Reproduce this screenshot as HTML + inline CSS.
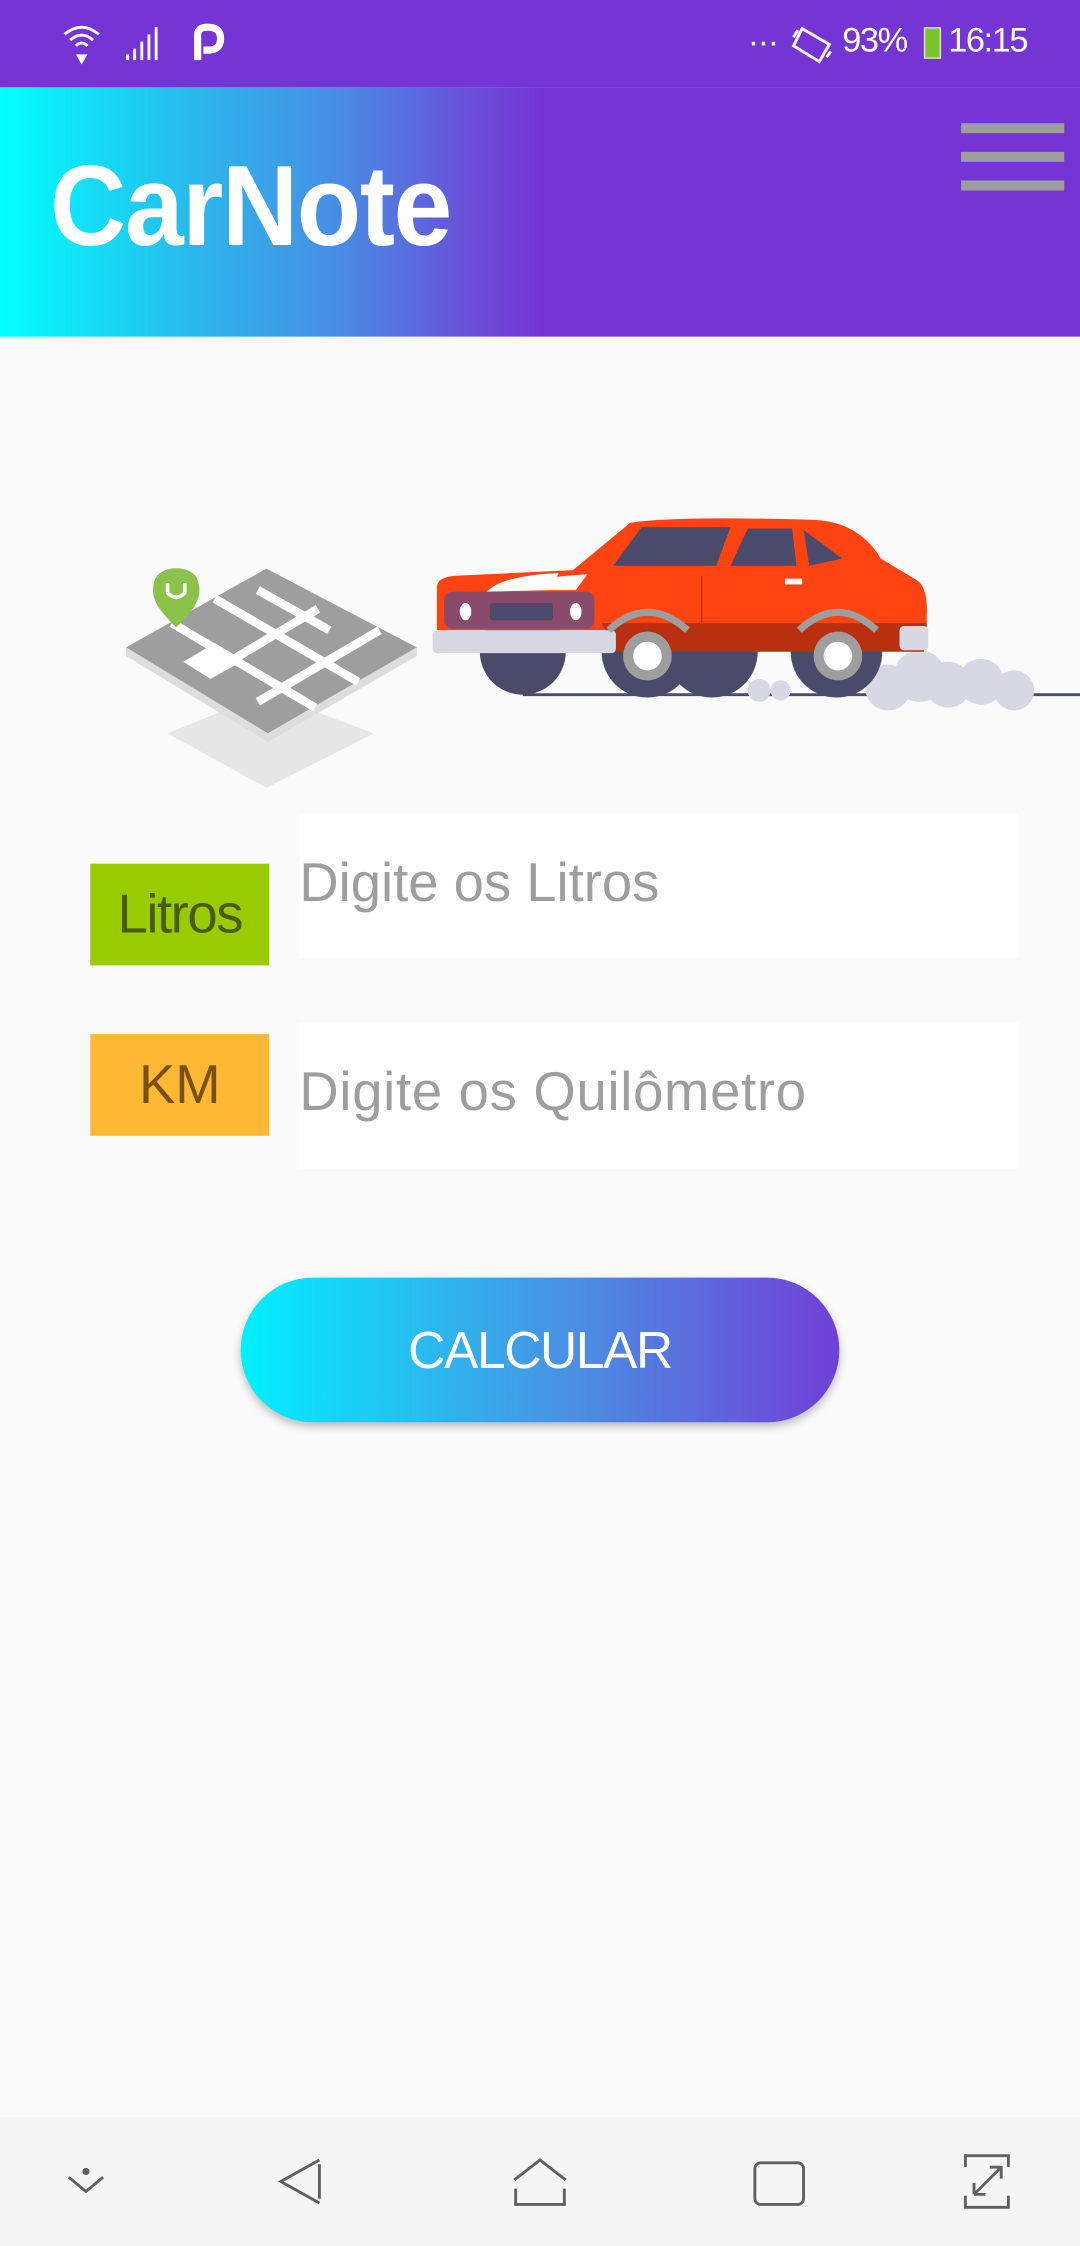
<!DOCTYPE html>
<html><head><meta charset="utf-8"><style>
html,body{margin:0;padding:0;width:1080px;height:2246px;overflow:hidden;background:#fafafa;font-family:"Liberation Sans","DejaVu Sans",sans-serif}
#s{position:absolute;left:0;top:0;width:754px;height:1568px;transform:scale(1.43236);transform-origin:0 0;background:#fafafa}
.a{position:absolute}
</style></head><body><div id="s">
<div class="a" style="left:0;top:0;width:754px;height:61px;background:#7535d4"></div>
<div class="a" style="left:0;top:61px;width:754px;height:174px;background:linear-gradient(90deg,#00ffff 0%,#2ab8ec 18%,#4a8ae4 32%,#6a4ed8 44%,#7535d4 50%,#7535d4 100%)"></div>
<!-- status -->
<svg class="a" style="left:40px;top:14px" width="130" height="34" viewBox="0 0 130 34">
<g fill="none" stroke="#fff" stroke-width="2"><path d="M5 10 Q17 0 29 10"/><path d="M9 14 Q17 7 25 14"/><path d="M13 18 Q17 14 21 18"/></g>
<path d="M13 24 L21 24 L17 31Z" fill="#fff"/>
<g fill="#fff"><rect x="48" y="24" width="2" height="4"/><rect x="53" y="20" width="2" height="8"/><rect x="58" y="15" width="2" height="13"/><rect x="63" y="10" width="2" height="18"/><rect x="68" y="5" width="2" height="23"/></g>
<path d="M98 28 V10 Q98 5 105 5 Q114 5 114 13 Q114 21 105 21 H102" fill="none" stroke="#fff" stroke-width="5"/>
</svg>
<div class="a" style="left:522px;top:16px;color:#fff;font-size:24px;letter-spacing:-1px">···</div>
<svg class="a" style="left:552px;top:17px" width="30" height="28" viewBox="0 0 30 28"><g fill="none" stroke="#fff" stroke-width="2"><path d="M8 3 L27 14 L20 26 L2 15Z"/><path d="M5 4 L2 9"/><path d="M25 23 L28 19"/></g></svg>
<div class="a" style="left:588px;top:15px;color:#fff;font-size:24px;letter-spacing:-1px">93%</div>
<div class="a" style="left:645px;top:19px;width:12px;height:22px;border:1.5px solid #ddd;box-sizing:border-box;background:#7dc42a"></div>
<div class="a" style="left:662px;top:15px;color:#fff;font-size:24px;letter-spacing:-1px">16:15</div>
<div class="a" style="left:35px;top:98px;color:#fff;font-size:80px;font-weight:bold;letter-spacing:-1px;transform:scaleX(0.92);transform-origin:0 0">CarNote</div>
<div class="a" style="left:671px;top:86px;width:72px;height:7px;background:#9e9e9e"></div>
<div class="a" style="left:671px;top:106px;width:72px;height:7px;background:#9e9e9e"></div>
<div class="a" style="left:671px;top:126px;width:72px;height:7px;background:#9e9e9e"></div>
<!-- illustration -->
<svg class="a" style="left:0;top:340px" width="754" height="220" viewBox="0 340 754 220">
<path d="M186 484 L261 512 L186 550 L117 512Z" fill="#e6e6e6"/>
<path d="M88 452 L186 397 L291 452 L187 512Z" fill="#9e9e9e"/>
<path d="M88 452 L187 512 L291 452 L291 458 L187 518 L88 458Z" fill="#ddd"/>
<g stroke="#fff" stroke-width="6" fill="none"><path d="M150 418 L250 476"/><path d="M120 435 L220 494"/><path d="M222 425 L150 468"/><path d="M265 440 L180 490"/><path d="M180 412 L230 440"/></g>
<path d="M128 462 L150 449 L170 461 L147 474Z" fill="#fff"/>
<path d="M123 438 C110 425 104 417 108 405 C112 394 134 394 138 405 C142 417 136 425 123 438Z" fill="#8bc34a"/>
<path d="M117 407 V414 Q123 420 129 414 V407" stroke="#fff" stroke-width="2.5" fill="none"/>
<line x1="365" y1="485" x2="754" y2="485" stroke="#4a4a6a" stroke-width="2"/>
<g fill="#d8d8e4"><circle cx="620" cy="480" r="16"/><circle cx="642" cy="472" r="18"/><circle cx="662" cy="478" r="16"/><circle cx="685" cy="476" r="16"/><circle cx="708" cy="482" r="14"/><circle cx="530" cy="482" r="8"/><circle cx="545" cy="482" r="7"/></g>
<circle cx="365" cy="455" r="30" fill="#4a4a6a"/>
<circle cx="452" cy="455" r="32" fill="#4a4a6a"/>
<circle cx="497" cy="455" r="32" fill="#4a4a6a"/>
<circle cx="584" cy="455" r="32" fill="#4a4a6a"/>
<path d="M305 410 Q305 403 318 402 L400 398 L440 365 Q470 360 570 363 Q600 365 615 390 L640 405 Q648 410 647 430 L647 440 L305 440Z" fill="#ff4411"/>
<path d="M420 435 L647 435 L645 455 L430 455Z" fill="#b83010"/>
<path d="M428 395 L448 368 L510 368 L500 395Z" fill="#4a4a6a"/>
<path d="M510 395 L522 369 L553 369 L556 395Z" fill="#4a4a6a"/>
<path d="M561 370 L588 390 L565 395Z" fill="#4a4a6a"/>
<path d="M490 402 L490 435" stroke="#c43010" stroke-width="1"/>
<rect x="548" y="404" width="12" height="4" fill="#fff"/>
<path d="M340 413 Q350 402 390 400 L385 412Z M358 412 Q370 403 410 401 L402 412Z" fill="#fff"/>
<rect x="310" y="413" width="105" height="26" rx="6" fill="#8a4a6a"/>
<ellipse cx="325" cy="427" rx="4" ry="6" fill="#fff"/><ellipse cx="402" cy="427" rx="4" ry="6" fill="#fff"/>
<rect x="342" y="421" width="44" height="12" rx="2" fill="#4a4a6a"/>
<rect x="302" y="440" width="128" height="16" rx="3" fill="#d8d8e4"/>
<rect x="628" y="437" width="20" height="17" rx="3" fill="#d8d8e4"/>
<path d="M425 440 Q452 415 480 440" stroke="#9e9e9e" stroke-width="5" fill="none"/>
<path d="M558 440 Q585 415 612 440" stroke="#9e9e9e" stroke-width="5" fill="none"/>
<circle cx="452" cy="458" r="17" fill="#9e9e9e"/><circle cx="452" cy="458" r="10" fill="#fff"/>
<circle cx="585" cy="458" r="17" fill="#9e9e9e"/><circle cx="585" cy="458" r="10" fill="#fff"/>
</svg>
<!-- form -->
<div class="a" style="left:63px;top:603px;width:125px;height:71px;background:#99cc00;color:#4a5c00;font-size:38px;line-height:73px;text-align:center;letter-spacing:-1px">Litros</div>
<div class="a" style="left:209px;top:568px;width:502px;height:101px;background:#fff"></div>
<div class="a" style="left:209px;top:596px;color:#9e9e9e;font-size:38px;letter-spacing:0px">Digite os Litros</div>
<div class="a" style="left:63px;top:722px;width:125px;height:71px;background:#ffb833;color:#7a5010;font-size:38px;line-height:73px;text-align:center">KM</div>
<div class="a" style="left:209px;top:714px;width:502px;height:102px;background:#fff"></div>
<div class="a" style="left:209px;top:742px;color:#9e9e9e;font-size:38px;letter-spacing:0.5px">Digite os Quilômetro</div>
<div class="a" style="left:168px;top:892px;width:418px;height:101px;border-radius:51px;background:linear-gradient(90deg,#00f0ff,#4a90e2 55%,#7040d8);box-shadow:0 3px 6px rgba(0,0,0,0.25);color:#fff;font-size:36px;line-height:101px;text-align:center;letter-spacing:-1px">CALCULAR</div>
<!-- nav -->
<div class="a" style="left:0;top:1478px;width:754px;height:90px;background:#f5f5f5"></div>
<svg class="a" style="left:0;top:1478px" width="754" height="90" viewBox="0 0 754 90">
<g fill="none" stroke="#5f5f5f" stroke-width="2">
<path d="M48 42 L60 52 L72 42"/>
<path d="M223 30 L196 45 L223 60"/><path d="M223 33 V57"/>
<path d="M359 44 L377 30 L395 44"/><path d="M360 50 V61 H394 V50"/>
<rect x="527" y="32" width="34" height="29" rx="4"/>
<path d="M674 35 V27 H704 V35"/><path d="M674 55 V63 H704 V55"/><path d="M680 54 L699 35 M691 35 H699 V43 M680 54 H688 M680 54 V46"/>
</g>
<circle cx="60" cy="38" r="2.5" fill="#5f5f5f"/>
</svg>
</div></body></html>
